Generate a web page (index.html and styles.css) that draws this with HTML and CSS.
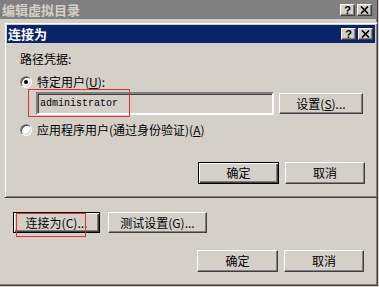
FILE: index.html
```html
<!DOCTYPE html>
<html lang="zh-CN">

<head>
  <meta charset="UTF-8" />
  <meta name="viewport" content="width=device-width, initial-scale=1.0" />
  <title>编辑虚拟目录</title>
  <link rel="stylesheet" href="styles.css">
</head>

<body>

  <div class="janela">
    <div class="titulo titulo-inativo">
      <span>编辑虚拟目录</span>
      <div class="botoes-titulo">
        <span class="btn-cap">?</span>
        <span class="btn-cap">
          <svg width="9" height="8" viewBox="0 0 9 8"><path d="M1 0.5 L8 7.5 M8 0.5 L1 7.5" stroke="#000" stroke-width="1.6" /></svg>
        </span>
      </div>
    </div>

    <div class="corpo-externo">
      <div class="linha-acoes">
        <button class="btn btn-padrao btn-conectar">连接为(C)...<span class="marca marca-conectar"></span></button>
        <button class="btn btn-testar">测试设置(G)...</button>
      </div>
      <div class="linha-ok">
        <button class="btn btn-ok">确定</button>
        <button class="btn btn-cancelar">取消</button>
      </div>
    </div>

    <!-- Janela "Conectar como" sobre a janela principal -->
    <div class="dialogo">
      <div class="titulo">
        <span>连接为</span>
        <div class="botoes-titulo">
          <span class="btn-cap">?</span>
          <span class="btn-cap">
            <svg width="9" height="8" viewBox="0 0 9 8"><path d="M1 0.5 L8 7.5 M8 0.5 L1 7.5" stroke="#000" stroke-width="1.6" /></svg>
          </span>
        </div>
      </div>

      <div class="corpo-dialogo">
        <div class="rotulo">路径凭据:</div>

        <div class="linha-radio">
          <span class="radio marcado"></span>
          <span>特定用户(<u>U</u>):</span>
        </div>

        <div class="linha-usuario">
          <div class="campo-wrap">
            <input type="text" class="campo" value="administrator" />
            <span class="marca marca-campo"></span>
          </div>
          <button class="btn btn-config">设置(<u>S</u>)...</button>
        </div>

        <div class="linha-radio linha-radio-2">
          <span class="radio"></span>
          <span>应用程序用户(通过身份验证)(<u>A</u>)</span>
        </div>

        <div class="linha-ok linha-ok-dialogo">
          <button class="btn btn-padrao btn-ok">确定</button>
          <button class="btn btn-cancelar">取消</button>
        </div>
      </div>
    </div>
  </div>

</body>

</html>
```

FILE: styles.css
```css
:root {
  --face: #d4d0c8;
  --sombra: #808080;
  --escuro: #404040;
  --azul: #0a246a;
  --vermelho: #e0303c;
}

* {
  box-sizing: border-box;
}

body {
  margin: 0;
  font-family: 'Noto Sans CJK SC', 'Noto Sans', sans-serif;
  font-size: 12px;
  line-height: 14px;
  background-color: var(--face);
  color: #000;
}

u {
  text-decoration-thickness: 1px;
  text-underline-offset: 1px;
}

/* Janela principal */
.janela {
  position: relative;
  width: 378px;
  height: 286px;
  border-right: 1px solid var(--escuro);
  border-bottom: 1px solid var(--escuro);
  box-shadow: inset -1px -1px var(--sombra);
}

.titulo {
  height: 18px;
  display: flex;
  justify-content: space-between;
  align-items: center;
  padding: 0 2px 0 1px;
  background-color: var(--azul);
  color: white;
  font-weight: bold;
  font-size: 13px;
  line-height: 18px;
}

.titulo-inativo {
  height: 19px;
  padding: 0 5px 0 2px;
  background-color: var(--sombra);
  color: var(--face);
}

.botoes-titulo {
  display: flex;
  gap: 2px;
}

.btn-cap {
  width: 15px;
  height: 12px;
  display: flex;
  justify-content: center;
  align-items: center;
  background-color: var(--face);
  border: 1px solid;
  border-color: #fff var(--escuro) var(--escuro) #fff;
  box-shadow: inset -1px -1px var(--sombra);
  color: #000;
  font-family: 'Liberation Sans', sans-serif;
  font-size: 11px;
  font-weight: bold;
  line-height: 10px;
}

/* Botões clássicos */
.btn {
  height: 22px;
  padding: 0;
  border: 1px solid;
  border-color: #fff var(--escuro) var(--escuro) #fff;
  box-shadow: inset -1px -1px var(--sombra);
  background-color: var(--face);
  font-family: inherit;
  font-size: 12px;
  line-height: 14px;
  color: #000;
}

.btn-padrao {
  border-color: #000;
  box-shadow: inset 1px 1px #fff, inset -1px -1px var(--escuro), inset -2px -2px var(--sombra);
}

.btn-ok {
  width: 81px;
}

.btn-cancelar {
  width: 80px;
}

/* Conteúdo da janela principal (atrás do diálogo) */
.corpo-externo {
  padding: 193px 13px 0 13px;
}

.linha-acoes {
  display: flex;
  gap: 8px;
}

.linha-acoes .btn {
  height: 21px;
}

.btn-conectar {
  position: relative;
  width: 87px;
}

.btn-testar {
  width: 99px;
}

.linha-ok {
  display: flex;
  justify-content: flex-end;
  gap: 6px;
  margin-top: 17px;
}

/* Diálogo "连接为" */
.dialogo {
  position: absolute;
  left: 4px;
  top: 22px;
  width: 374px;
  height: 176px;
  padding: 2px;
  border: 1px solid;
  border-color: var(--face) var(--escuro) var(--escuro) var(--face);
  box-shadow: inset 1px 1px #fff, inset -1px -1px var(--sombra);
  background-color: var(--face);
}

.corpo-dialogo {
  padding: 9px 10px 0 13px;
}

.linha-radio {
  display: flex;
  align-items: center;
  gap: 5px;
  margin-top: 9px;
}

.linha-radio-2 {
  margin-top: 8px;
}

.radio {
  position: relative;
  width: 12px;
  height: 12px;
  border-radius: 50%;
  border: 1px solid;
  border-color: var(--sombra) #fff #fff var(--sombra);
  box-shadow: inset 1px 1px var(--escuro), inset -1px -1px var(--face);
  background-color: white;
}

.radio.marcado::after {
  content: "";
  position: absolute;
  left: 3px;
  top: 3px;
  width: 4px;
  height: 4px;
  border-radius: 50%;
  background-color: #000;
}

.linha-usuario {
  display: flex;
  align-items: center;
  gap: 5px;
  height: 23px;
  margin-top: 3px;
  padding-left: 16px;
}

.campo-wrap {
  position: relative;
}

.campo {
  display: block;
  width: 238px;
  height: 23px;
  margin: 0;
  padding: 0 2px;
  border: 2px solid;
  border-color: var(--sombra) #fff #fff var(--sombra);
  box-shadow: inset 1px 1px var(--escuro), inset -1px -1px var(--face);
  background-color: var(--face);
  font-family: 'Liberation Mono', monospace;
  font-size: 10px;
  color: #000;
  outline: none;
}

.btn-config {
  width: 84px;
  height: 21px;
}

.linha-ok-dialogo {
  margin-top: 25px;
}

/* Marcações vermelhas por cima da captura */
.marca {
  position: absolute;
  border: 1px solid var(--vermelho);
  pointer-events: none;
}

.marca-campo {
  left: -8px;
  top: -3px;
  width: 102px;
  height: 28px;
}

.marca-conectar {
  left: 2px;
  top: 0;
  width: 70px;
  height: 24px;
}
```
